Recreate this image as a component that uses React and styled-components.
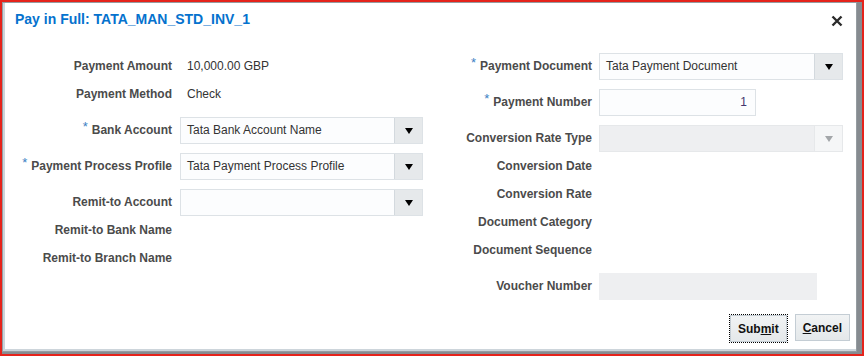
import React from 'react'
import styled, { createGlobalStyle } from 'styled-components'

const GlobalStyle = createGlobalStyle`
* {
  margin: 0;
  padding: 0;
  box-sizing: border-box;
}
body {
  font-family: "Liberation Sans", Arial, sans-serif;
  background: #fff;
}
`

const Screen = styled.div`
  width: 864px;
  height: 356px;
  border: 2px solid #e5231b;
  background: #868b90;
  display: flex;
  align-items: flex-start;
  overflow: hidden;
`

const Dialog = styled.div`
  width: 855px;
  height: 350px;
  background: #fff;
  border: 1px solid #959ca1;
  box-shadow: inset 2px -2px 0 #cdd5db;
  display: flex;
  flex-direction: column;
`

const Header = styled.div`
  height: 32px;
  display: flex;
  align-items: center;
  justify-content: space-between;
  padding: 0 13px 0 12px;
`

const Title = styled.h1`
  font-size: 14px;
  font-weight: bold;
  color: #0572ce;
`

const Close = styled.button`
  width: 12px;
  height: 12px;
  border: none;
  background: none;
  display: flex;
  margin-top: 3px;
`

const Body = styled.div`
  display: flex;
  padding: 9px 0 0 13px;
`

const Column = styled.div`
  width: ${p => p.$width}px;
  margin-left: ${p => p.$offset || 0}px;
  padding-top: ${p => p.$top || 0}px;
  display: flex;
  flex-direction: column;
`

const Row = styled.div`
  height: ${p => (p.$field ? 36 : 28)}px;
  display: flex;
  align-items: ${p => (p.$field ? 'flex-end' : 'center')};
  gap: ${p => p.$gap}px;
`

const Label = styled.label`
  width: ${p => p.$width}px;
  flex-shrink: 0;
  text-align: right;
  font-size: 12px;
  font-weight: bold;
  color: #4b4b4b;
  white-space: nowrap;
  line-height: 27px;
`

const Star = styled.span`
  color: #3b80c3;
  font-size: 13px;
  font-weight: normal;
  position: relative;
  top: -3px;
  margin-right: 4px;
`

const Value = styled.span`
  font-size: 12px;
  color: #333;
  padding-left: 7px;
`

const Select = styled.div`
  width: ${p => p.$width}px;
  height: 27px;
  display: flex;
  border: 1px solid ${p => (p.$disabled ? '#e6e8ea' : '#dde2e6')};
  background: ${p => (p.$disabled ? '#eeeff1' : '#fcfdfe')};
`

const SelectText = styled.span`
  flex: 1;
  padding: 0 6px;
  line-height: 25px;
  font-size: 12px;
  color: #333;
  white-space: nowrap;
`

const Caret = styled.span`
  width: 28px;
  display: flex;
  align-items: center;
  justify-content: center;
  border-left: 1px solid ${p => (p.$disabled ? '#e6e8ea' : '#d3d9de')};
  background: ${p => (p.$disabled ? '#f5f6f7' : '#e6e9eb')};

  &::after {
    content: '';
    border-left: 4px solid transparent;
    border-right: 4px solid transparent;
    border-top: 6px solid ${p => (p.$disabled ? '#a3a6a9' : '#000')};
  }
`

const TextInput = styled.div`
  width: ${p => p.$width}px;
  height: 27px;
  border: 1px solid ${p => (p.$disabled ? '#eeeff1' : '#dde2e6')};
  background: ${p => (p.$disabled ? '#eeeff1' : '#fcfdfe')};
  font-size: 12px;
  line-height: 25px;
  text-align: right;
  padding-right: 8px;
  color: #44366f;
`

const Footer = styled.div`
  display: flex;
  justify-content: flex-end;
  gap: 8px;
  padding: 14px 6px 0 0;
`

const Button = styled.button`
  height: 27px;
  padding: 0 ${p => p.$pad}px;
  font-family: "Liberation Sans", Arial, sans-serif;
  font-size: 12px;
  font-weight: bold;
  color: #111;
  background: linear-gradient(#f1f3f4, #e4e8ea);
  border: 1px solid #c4cdd4;
  outline: ${p => (p.$focus ? '1px dotted #000' : 'none')};
  margin-top: ${p => (p.$focus ? 1 : 0)}px;

  u {
    text-decoration: underline;
  }
`

const LEFT_LABEL = 156
const RIGHT_LABEL = 152

const Field = ({ label, required, labelWidth, gap, field, children }) => (
  <Row $field={field} $gap={gap}>
    <Label $width={labelWidth}>
      {required && <Star>*</Star>}
      {label}
    </Label>
    {children}
  </Row>
)

const Dropdown = ({ width, text, disabled }) => (
  <Select $width={width} $disabled={disabled}>
    <SelectText>{text}</SelectText>
    <Caret $disabled={disabled} />
  </Select>
)

export default function App() {
  return (
    <>
      <GlobalStyle />
      <Screen>
        <Dialog>
          <Header>
            <Title>Pay in Full: TATA_MAN_STD_INV_1</Title>
            <Close aria-label="Close">
              <svg width="12" height="12" viewBox="0 0 12 12">
                <path d="M1.5 1.5 L10.5 10.5 M10.5 1.5 L1.5 10.5" stroke="#2b2b2b" strokeWidth="2.4" />
              </svg>
            </Close>
          </Header>
          <Body>
            <Column $width={407} $top={8}>
              <Field label="Payment Amount" labelWidth={LEFT_LABEL} gap={8}>
                <Value>10,000.00 GBP</Value>
              </Field>
              <Field label="Payment Method" labelWidth={LEFT_LABEL} gap={8}>
                <Value>Check</Value>
              </Field>
              <Field label="Bank Account" required field labelWidth={LEFT_LABEL} gap={8}>
                <Dropdown width={243} text="Tata Bank Account Name" />
              </Field>
              <Field label="Payment Process Profile" required field labelWidth={LEFT_LABEL} gap={8}>
                <Dropdown width={243} text="Tata Payment Process Profile" />
              </Field>
              <Field label="Remit-to Account" field labelWidth={LEFT_LABEL} gap={8}>
                <Dropdown width={243} text="" />
              </Field>
              <Field label="Remit-to Bank Name" labelWidth={LEFT_LABEL} gap={8} />
              <Field label="Remit-to Branch Name" labelWidth={LEFT_LABEL} gap={8} />
            </Column>
            <Column $width={403} $offset={17}>
              <Field label="Payment Document" required field labelWidth={RIGHT_LABEL} gap={7}>
                <Dropdown width={244} text="Tata Payment Document" />
              </Field>
              <Field label="Payment Number" required field labelWidth={RIGHT_LABEL} gap={7}>
                <TextInput $width={157}>1</TextInput>
              </Field>
              <Field label="Conversion Rate Type" field labelWidth={RIGHT_LABEL} gap={7}>
                <Dropdown width={244} text="" disabled />
              </Field>
              <Field label="Conversion Date" labelWidth={RIGHT_LABEL} gap={7} />
              <Field label="Conversion Rate" labelWidth={RIGHT_LABEL} gap={7} />
              <Field label="Document Category" labelWidth={RIGHT_LABEL} gap={7} />
              <Field label="Document Sequence" labelWidth={RIGHT_LABEL} gap={7} />
              <Field label="Voucher Number" field labelWidth={RIGHT_LABEL} gap={7}>
                <TextInput $width={218} $disabled />
              </Field>
            </Column>
          </Body>
          <Footer>
            <Button $pad={7} $focus>
              Sub<u>m</u>it
            </Button>
            <Button $pad={7}>
              <u>C</u>ancel
            </Button>
          </Footer>
        </Dialog>
      </Screen>
    </>
  )
}
